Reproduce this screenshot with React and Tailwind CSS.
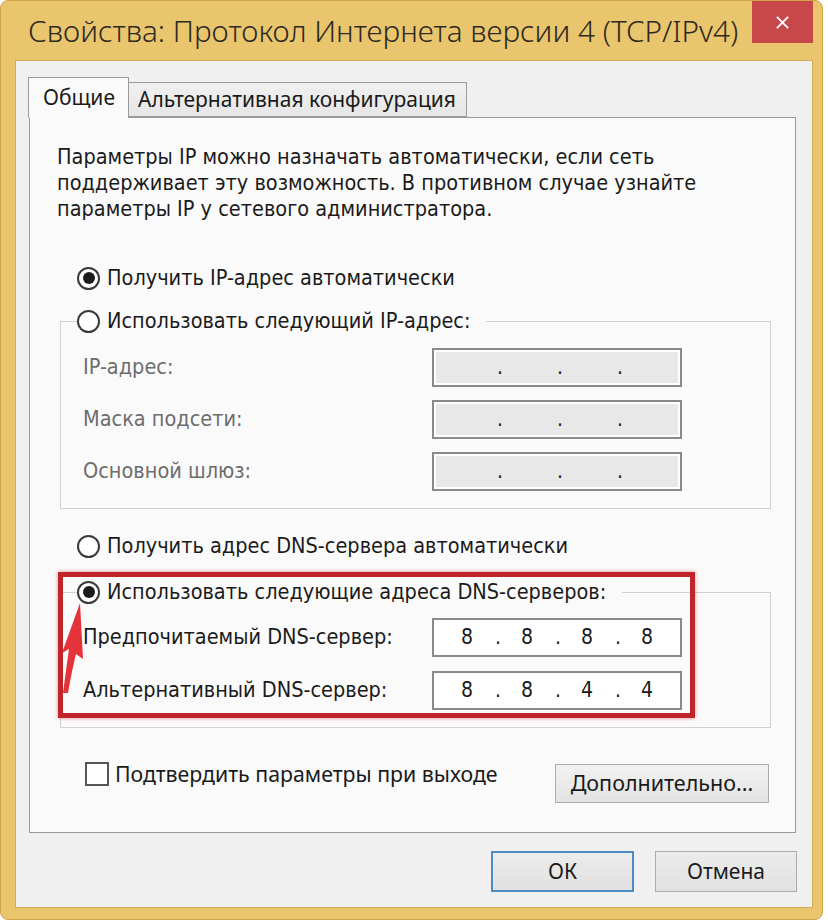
const tahoma = 'font-["DejaVu_Sans_Condensed","DejaVu_Sans",sans-serif]';
const segoe = 'font-["Noto_Sans",sans-serif]';

function Radio({ checked }) {
  return (
    <span className="w-[23px] h-[23px] rounded-full border-2 border-[#3a3a3a] bg-white flex items-center justify-center shrink-0">
      {checked && <span className="w-[12px] h-[12px] rounded-full bg-[#1c1c1c]" />}
    </span>
  );
}

function IpBox({ values, disabled }) {
  return (
    <div
      className={`w-[250px] h-[39px] border-2 border-[#8a8a8a] ${
        disabled ? 'p-[2px] bg-white' : 'bg-white'
      }`}
    >
      <div
        className={`h-full flex items-center pl-[5px] text-[21px] text-[#1a1a1a] ${
          disabled ? 'bg-[#e8e8e8]' : ''
        }`}
      >
        {values.map((v, i) => (
          <div key={i} className="flex items-center">
            <span className="w-[56px] text-center">{v}</span>
            {i < 3 && <span className="w-[4px] text-center">.</span>}
          </div>
        ))}
      </div>
    </div>
  );
}

function Row({ label, values, disabled }) {
  return (
    <div className="flex items-center h-[39px]">
      <span className={`w-[349px] ${disabled ? 'text-[#6d6d6d]' : 'text-[#1a1a1a]'}`}>{label}</span>
      <IpBox values={values} disabled={disabled} />
    </div>
  );
}

export default function App() {
  return (
    <div className="w-[828px] h-[924px] bg-white">
      <div className="w-[823px] h-[920px] rounded-[8px] bg-[#e9c56d] border border-[#d0a548] flex flex-col">
        {/* Title bar */}
        <div className="h-[59px] flex items-start justify-between pl-[27px]">
          <div className={`${segoe} font-light pt-[11px] text-[29.7px] leading-[38px] text-[#2e2a22] whitespace-nowrap`}>
            Свойства: Протокол Интернета версии 4 (TCP/IPv4)
          </div>
          <div className="mr-[9px] w-[61px] h-[42px] bg-[#c7474a] flex items-center justify-center">
            <svg width="15" height="15" viewBox="0 0 16 16">
              <path d="M2 2 L14 14 M14 2 L2 14" stroke="#fff" strokeWidth="2" />
            </svg>
          </div>
        </div>

        {/* Client area */}
        <div className="ml-[14px] mr-[9px] h-[848px] bg-[#f0f0f0] border border-[#d3ad57] pt-[16px] pl-[13px]">
          {/* Tabs */}
          <div className={`${segoe} flex items-end h-[40px] text-[21px] text-[#1a1a1a]`}>
            <div className="relative z-10 -ml-[1px] -mb-[1px] w-[101px] h-[41px] bg-[#fafafa] border border-b-0 border-[#9a9a9a] pl-[14px] pt-[4px]">
              Общие
            </div>
            <div className="w-[338px] h-[35px] bg-gradient-to-b from-[#f0f0f0] to-[#e6e6e6] border border-l-0 border-[#9a9a9a] pl-[9px] leading-[32px]">
              Альтернативная конфигурация
            </div>
          </div>

          {/* Panel */}
          <div className={`${tahoma} relative w-[767px] h-[716px] bg-[#fafafa] border border-[#9a9a9a] pt-[26px] pl-[27px] text-[21.5px] text-[#1a1a1a]`}>
            <p className="leading-[26px] whitespace-nowrap">
              Параметры IP можно назначать автоматически, если сеть
              <br />
              поддерживает эту возможность. В противном случае узнайте
              <br />
              параметры IP у сетевого администратора.
            </p>

            <div className="mt-[43px] ml-[20px] h-[26px] flex items-center gap-[7px]">
              <Radio checked />
              <span>Получить IP-адрес автоматически</span>
            </div>

            {/* Group 1 */}
            <div className="mt-[30px] ml-[3px] w-[711px] border border-[#d0d0d0]">
              <div className="-mt-[14px] ml-[16px] h-[26px] w-fit flex items-center gap-[7px] bg-[#fafafa] pr-[16px]">
                <Radio />
                <span>Использовать следующий IP-адрес:</span>
              </div>
              <div className="mt-[14px] pb-[17px] pl-[22px] flex flex-col gap-[13px]">
                <Row label="IP-адрес:" values={['', '', '', '']} disabled />
                <Row label="Маска подсети:" values={['', '', '', '']} disabled />
                <Row label="Основной шлюз:" values={['', '', '', '']} disabled />
              </div>
            </div>

            <div className="mt-[24px] ml-[20px] h-[26px] flex items-center gap-[7px]">
              <Radio />
              <span>Получить адрес DNS-сервера автоматически</span>
            </div>

            {/* Group 2 */}
            <div className="mt-[33px] ml-[3px] w-[711px] border border-[#d0d0d0]">
              <div className="-mt-[14px] ml-[16px] h-[26px] w-fit flex items-center gap-[7px] bg-[#fafafa] pr-[16px]">
                <Radio checked />
                <span>Использовать следующие адреса DNS-серверов:</span>
              </div>
              <div className="mt-[13px] pb-[17px] pl-[22px] flex flex-col gap-[14px]">
                <Row label="Предпочитаемый DNS-сервер:" values={['8', '8', '8', '8']} />
                <Row label="Альтернативный DNS-сервер:" values={['8', '8', '4', '4']} />
              </div>
            </div>

            {/* Confirm row */}
            <div className="mt-[34px] flex items-start">
              <div className={`${segoe} ml-[28px] w-[470px] flex items-center h-[24px] gap-[6px] text-[21.3px]`}>
                <span className="w-[24px] h-[24px] border-2 border-[#555] bg-white shrink-0" />
                <span className="whitespace-nowrap">Подтвердить параметры при выходе</span>
              </div>
              <button className={`${segoe} mt-[2px] w-[214px] h-[39px] bg-gradient-to-b from-[#f2f2f2] to-[#e3e3e3] border border-[#acacac] text-[21.5px] text-[#1a1a1a]`}>
                Дополнительно...
              </button>
            </div>

            {/* Highlight */}
            <div className="absolute left-[28px] top-[454px] w-[637px] h-[146px] border-[5px] border-[#c1252c] shadow-[0_0_4px_rgba(220,40,40,0.55)] pointer-events-none" />
            <svg className="absolute left-[25px] top-[480px]" width="40" height="100" viewBox="0 0 40 100">
              <path
                d="M25 5 L7 55 L14 51 Q11 72 8 95 L13 95 Q17 72 21 56 L28 61 Z"
                fill="#e3222b"
                opacity="0.92"
              />
            </svg>
          </div>

          {/* Buttons */}
          <div className={`${segoe} w-[768px] mt-[18px] flex justify-end gap-[21px] text-[21px] text-[#1a1a1a]`}>
            <button className="w-[143px] h-[41px] bg-gradient-to-b from-[#ececec] to-[#e1e1e1] border-2 border-[#4d8cc4]">
              ОК
            </button>
            <button className="w-[142px] h-[41px] bg-gradient-to-b from-[#ececec] to-[#e1e1e1] border border-[#acacac]">
              Отмена
            </button>
          </div>
        </div>
      </div>
    </div>
  );
}
